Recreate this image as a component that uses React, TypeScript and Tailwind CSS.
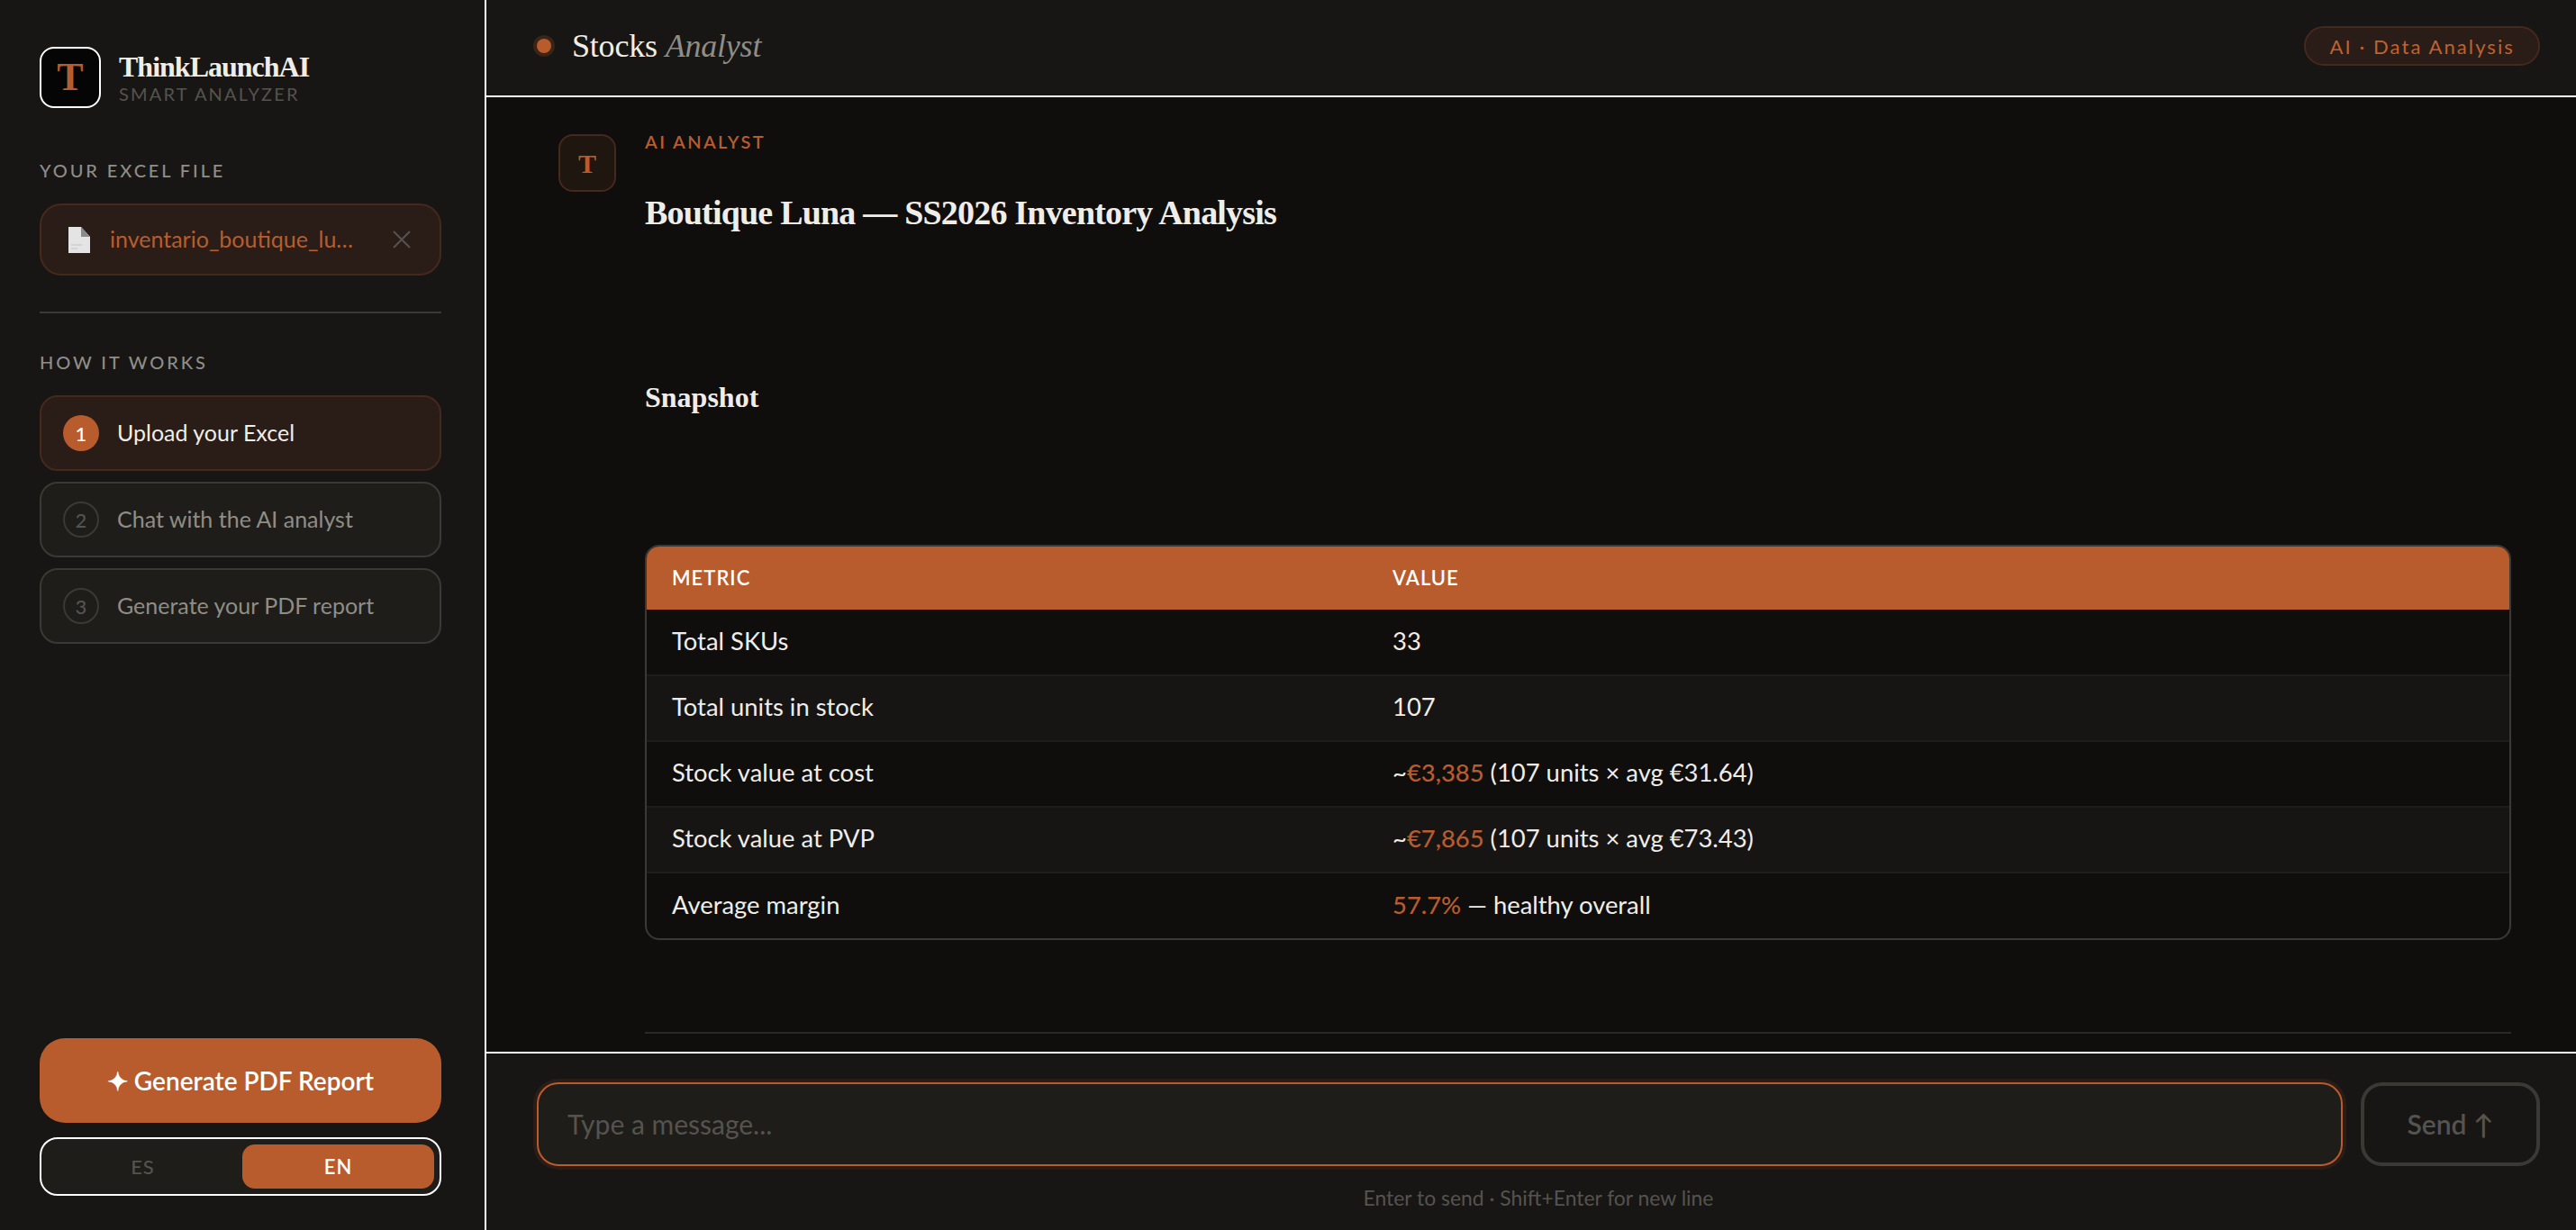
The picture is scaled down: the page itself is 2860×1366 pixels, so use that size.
const sans = "font-['Lato',sans-serif]";
const serif = "font-['Liberation_Serif',serif]";

const steps = [
  { n: 1, label: 'Upload your Excel', active: true },
  { n: 2, label: 'Chat with the AI analyst', active: false },
  { n: 3, label: 'Generate your PDF report', active: false },
];

const rows: { metric: string; value: React.ReactNode }[] = [
  { metric: 'Total SKUs', value: '33' },
  { metric: 'Total units in stock', value: '107' },
  {
    metric: 'Stock value at cost',
    value: (
      <>
        ~<span className="font-medium text-[#b85c2e]">€3,385</span> (107 units × avg €31.64)
      </>
    ),
  },
  {
    metric: 'Stock value at PVP',
    value: (
      <>
        ~<span className="font-medium text-[#b85c2e]">€7,865</span> (107 units × avg €73.43)
      </>
    ),
  },
  {
    metric: 'Average margin',
    value: (
      <>
        <span className="font-medium text-[#b85c2e]">57.7%</span> — healthy overall
      </>
    ),
  },
];

const FileIcon = () => (
  <svg width="24" height="29" viewBox="0 0 24 29" className="shrink-0">
    <path d="M0 0H14L24 11V29H0Z" fill="#e4e4e4" />
    <path d="M14 0L24 11H14Z" fill="#8a8a8a" />
    <path d="M3 20H15M3 24H10" stroke="#c4c4c4" strokeWidth="1" />
  </svg>
);

const Sidebar = () => (
  <aside className="flex w-[540px] shrink-0 flex-col border-r-2 border-white bg-[#171614] pl-[44px] pr-[48px] pt-[52px] pb-[38px]">
    <div className="flex items-center gap-[20px]">
      <div className={`flex h-[68px] w-[68px] items-center justify-center rounded-[16px] border-2 border-white bg-[#050505] text-[44px] font-bold leading-none text-[#b85c2e] ${serif}`}>
        T
      </div>
      <div>
        <div className={`text-[32px] font-bold leading-[36px] tracking-[-1px] text-[#f0ede8] ${serif}`}>ThinkLaunchAI</div>
        <div className="text-[20px] leading-[24px] tracking-[2.2px] text-[#55534e]">SMART ANALYZER</div>
      </div>
    </div>

    <div className="mt-[57px] text-[20px] font-medium leading-[24px] tracking-[2.9px] text-[#8f8d87]">YOUR EXCEL FILE</div>
    <div className="mt-[25px] flex h-[80px] items-center rounded-[24px] border-2 border-[#45291c] bg-[#2a1c17] pl-[30px] pr-[32px]">
      <FileIcon />
      <span className="ml-[22px] w-[276px] truncate text-[25px] text-[#b85c2e]">inventario_boutique_luna.xlsx</span>
      <svg width="20" height="20" viewBox="0 0 20 20" className="ml-auto shrink-0" stroke="#55534e" strokeWidth="2" fill="none">
        <path d="M1 1L19 19M19 1L1 19" />
      </svg>
    </div>

    <div className="mt-[40px] h-[2px] bg-[#3a3936]" />

    <div className="mt-[42px] text-[20px] font-medium leading-[24px] tracking-[2.9px] text-[#8f8d87]">HOW IT WORKS</div>
    <div className="mt-[25px] flex flex-col gap-[12px]">
      {steps.map(s => (
        <div
          key={s.n}
          className={`flex h-[84px] items-center gap-[20px] rounded-[20px] border-2 pl-[24px] ${s.active ? 'border-[#45291c] bg-[#2a1c17]' : 'border-[#3a3936] bg-[#1e1d19]'}`}
        >
          <div
            className={`flex h-[40px] w-[40px] items-center justify-center rounded-full text-[22px] font-medium ${s.active ? 'bg-[#b85c2e] text-white' : 'border-2 border-[#3a3936] text-[#55534e]'}`}
          >
            {s.n}
          </div>
          <span className={`text-[25px] ${s.active ? 'text-[#f0ede8]' : 'text-[#8f8d87]'}`}>{s.label}</span>
        </div>
      ))}
    </div>

    <button className="mt-auto flex h-[94px] items-center justify-center rounded-[28px] bg-[#b85c2e] text-[28px] font-semibold text-white">
      ✦ Generate PDF Report
    </button>
    <div className="mt-[16px] flex h-[65px] gap-[4px] rounded-[20px] border-2 border-white bg-[#1e1d19] p-[6px]">
      <button className="flex-1 rounded-[14px] text-[22px] font-medium tracking-[1px] text-[#55534e]">ES</button>
      <button className="flex-1 rounded-[14px] bg-[#b85c2e] text-[22px] font-semibold tracking-[1px] text-white">EN</button>
    </div>
  </aside>
);

const Header = () => (
  <header className="flex h-[108px] shrink-0 items-center justify-between border-b-2 border-white bg-[#171614] pb-[4px] pl-[56px] pr-[40px]">
    <div className="flex items-center gap-[23px]">
      <span className="h-[16px] w-[16px] rounded-full bg-[#b85c2e] shadow-[0_0_0_4px_#3a2417]" />
      <h1 className={`text-[36px] font-normal leading-none tracking-[-0.2px] text-[#f0ede8] ${serif}`}>
        Stocks <em className="text-[#8f8d87]">Analyst</em>
      </h1>
    </div>
    <div className="flex h-[44px] items-center rounded-full border-2 border-[#45291c] bg-[#2a1c17] px-[26px] text-[22px] tracking-[2.1px] text-[#c0622f]">
      AI · Data Analysis
    </div>
  </header>
);

const Message = () => (
  <div className="flex min-h-0 flex-1 gap-[32px] overflow-hidden bg-[#0f0e0c] pl-[80px] pr-[72px] pt-[41px]">
    <div className={`flex h-[64px] w-[64px] shrink-0 items-center justify-center rounded-[16px] border-2 border-[#45291c] bg-[#1f1610] text-[30px] font-bold text-[#b85c2e] ${serif}`}>
      T
    </div>
    <div className="flex-1">
      <div className="text-[20px] font-semibold leading-[16px] tracking-[2.4px] text-[#b85c2e]">AI ANALYST</div>
      <h2 className={`mt-[47px] text-[38px] font-bold leading-[48px] tracking-[-0.8px] text-[#f0ede8] ${serif}`}>
        Boutique Luna — SS2026 Inventory Analysis
      </h2>
      <h3 className={`mt-[161px] text-[32px] font-bold leading-[40px] text-[#f0ede8] ${serif}`}>Snapshot</h3>
      <div className="mt-[144px] overflow-hidden rounded-[16px] border-2 border-[#3a3936]">
        <table className="w-full table-fixed border-collapse text-left">
          <colgroup>
            <col className="w-[800px]" />
            <col />
          </colgroup>
          <thead>
            <tr className="h-[70px] bg-[#b85c2e] text-[22px] font-semibold tracking-[1px] text-white">
              <th className="pb-[2px] pl-[28px] font-semibold">METRIC</th>
              <th className="pb-[2px] pl-[28px] font-semibold">VALUE</th>
            </tr>
          </thead>
          <tbody className="text-[27.4px] text-[#f0ede8]">
            {rows.map((r, i) => (
              <tr key={r.metric} className={`h-[73px] ${i < rows.length - 1 ? 'border-b-2 border-[#1e1d19]' : ''} ${i % 2 === 1 ? 'bg-[#161514]' : ''}`}>
                <td className="pb-[3px] pl-[28px]">{r.metric}</td>
                <td className="pb-[3px] pl-[28px]">{r.value}</td>
              </tr>
            ))}
          </tbody>
        </table>
      </div>
      <div className="mt-[102px] h-[2px] bg-[#2a2926]" />
    </div>
  </div>
);

const Composer = () => (
  <footer className="h-[198px] shrink-0 border-t-2 border-white bg-[#171614] pl-[56px] pr-[40px] pt-[32px]">
    <div className="flex gap-[20px]">
      <input
        placeholder="Type a message..."
        readOnly
        className="h-[93px] min-w-0 flex-1 rounded-[24px] border-2 border-[#b85c2e] bg-[#1e1d19] px-[32px] pb-[2px] text-[30px] text-[#f0ede8] shadow-[0_0_0_4px_#2a1c17] outline-none placeholder:text-[#55534e]"
      />
      <button className="h-[93px] w-[199px] rounded-[24px] border-4 border-[#3a3936] text-[30px] font-semibold text-[#55534e]">
        Send ↑
      </button>
    </div>
    <p className="mt-[21px] text-center text-[22.9px] leading-[28px] text-[#55534e]">Enter to send · Shift+Enter for new line</p>
  </footer>
);

export default function App() {
  return (
    <div className={`flex h-screen w-full overflow-hidden bg-[#0f0e0c] ${sans}`}>
      <Sidebar />
      <main className="flex min-w-0 flex-1 flex-col">
        <Header />
        <Message />
        <Composer />
      </main>
    </div>
  );
}
